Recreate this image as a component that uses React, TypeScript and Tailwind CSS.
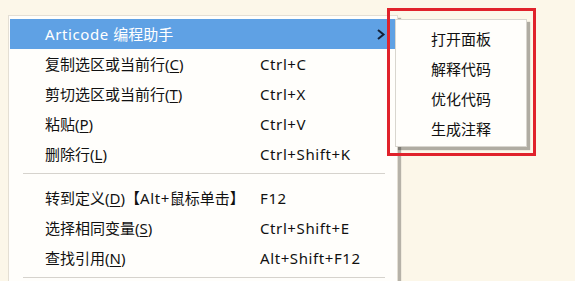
import React from "react";

type Item =
  | { kind: "item"; label: string; key?: string; shortcut?: string; active?: boolean; sub?: boolean }
  | { kind: "sep" };

const items: Item[] = [
  { kind: "item", label: "编程助手", active: true, sub: true },
  { kind: "item", label: "复制选区或当前行(", key: "C", shortcut: "Ctrl+C" },
  { kind: "item", label: "剪切选区或当前行(", key: "T", shortcut: "Ctrl+X" },
  { kind: "item", label: "粘贴(", key: "P", shortcut: "Ctrl+V" },
  { kind: "item", label: "删除行(", key: "L", shortcut: "Ctrl+Shift+K" },
  { kind: "sep" },
  { kind: "item", label: "转到定义(", key: "D", shortcut: "F12" },
  { kind: "item", label: "选择相同变量(", key: "S", shortcut: "Ctrl+Shift+E" },
  { kind: "item", label: "查找引用(", key: "N", shortcut: "Alt+Shift+F12" },
  { kind: "sep" },
];

const font = {
  fontFamily: '"Noto Sans", "Noto Sans CJK SC", sans-serif',
};

export default function App() {
  return (
    <div
      className="relative h-[281px] w-[575px] overflow-hidden bg-[#fcf7e9] pl-[8px] pt-[15px] text-[15px] text-[#111]"
      style={font}
    >
      {/* main context menu */}
      <div className="h-[300px] w-[390px] border border-[#e4dfd4] bg-[#fffefb] px-[1px] pt-[3px] shadow-[3px_3px_1px_rgba(0,0,0,0.28)]">
        {items.map((it, i) =>
          it.kind === "sep" ? (
            <div key={i} className="pb-[9px] pl-[13px] pr-[11px] pt-[4px]">
              <div className="h-px bg-[#d6d3cd]" />
            </div>
          ) : (
            <div
              key={i}
              className={
                "relative flex h-[30px] items-center pl-[35px] " +
                (it.active ? "bg-[#5fa1e4] text-white" : "")
              }
            >
              <span className="w-[215px] whitespace-nowrap">
                {it.active ? (
                  <>
                    <span className="tracking-[0.6px]">Articode </span>
                    {it.label}
                  </>
                ) : (
                  <>
                    {it.label}
                    <span className="underline underline-offset-[2px]">{it.key}</span>)
                    {it.key === "D" ? (
                      <span>
                        【<span className="tracking-[0.6px]">Alt+</span>鼠标单击】
                      </span>
                    ) : null}
                  </>
                )}
              </span>
              {it.shortcut ? (
                <span className="whitespace-nowrap tracking-[0.6px]">{it.shortcut}</span>
              ) : null}
              {it.sub ? (
                <svg
                  className="absolute left-[366px] top-[10px]"
                  width="10"
                  height="11"
                  viewBox="0 0 10 11"
                >
                  <path d="M2 1 L7.5 5.5 L2 10" fill="none" stroke="#142036" strokeWidth="2" />
                </svg>
              ) : null}
            </div>
          )
        )}
      </div>

      {/* submenu */}
      <div className="absolute left-[395px] top-[19px] h-[128px] w-[132px] border border-[#d9d6cf] bg-[#fffefb] pl-[35px] pt-[4px] shadow-[3px_3px_1px_rgba(0,0,0,0.3)]">
        {["打开面板", "解释代码", "优化代码", "生成注释"].map((t) => (
          <div key={t} className="flex h-[30px] items-center whitespace-nowrap">
            {t}
          </div>
        ))}
      </div>

      {/* red annotation box */}
      <div className="pointer-events-none absolute left-[387px] top-[8px] h-[148px] w-[149px] border-[3px] border-[#e0222b]" />
    </div>
  );
}
